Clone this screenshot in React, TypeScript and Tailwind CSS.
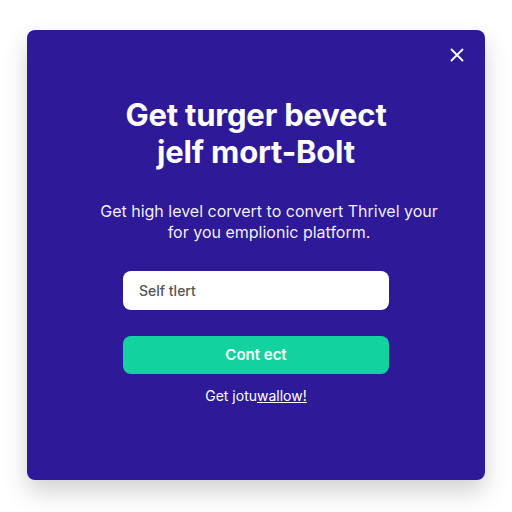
import React from "react";

export default function App() {
  return (
    <div className="w-[512px] h-[512px] bg-white pt-[30px] pl-[27px]" style={{ fontFamily: "Inter, 'Noto Sans', sans-serif" }}>
      <div className="relative w-[458px] h-[450px] rounded-[8px] bg-[#2e1a98] shadow-[0_12px_24px_rgba(0,0,0,0.18)] flex flex-col items-center">
        <button className="absolute right-[21px] top-[18px] text-white">
          <svg width="14" height="14" viewBox="0 0 14 14" fill="none" stroke="white" strokeWidth="1.8" strokeLinecap="round">
            <path d="M1.5 1.5 L12.5 12.5 M12.5 1.5 L1.5 12.5" />
          </svg>
        </button>
        <h1 className="mt-[66px] text-white text-[31px] leading-[37px] font-bold text-center tracking-[-0.2px]">
          Get turger bevect
          <br />
          jelf mort-Bolt
        </h1>
        <p className="mt-[31px] ml-[26px] text-white/95 text-[16px] leading-[21px] text-center">
          Get high level corvert to convert Thrivel your
          <br />
          for you emplionic platform.
        </p>
        <div className="mt-[28px] w-[266px] h-[39px] rounded-[8px] bg-white flex items-center px-[16px]">
          <span className="text-[14px] text-[#555] font-medium">Self tlert</span>
        </div>
        <button className="mt-[26px] w-[266px] h-[38px] rounded-[8px] bg-[#12d3a0] text-white text-[15px] font-semibold">
          Cont ect
        </button>
        <p className="mt-[11px] text-white text-[14px]">
          Get jotu<span className="underline">wallow!</span>
        </p>
      </div>
    </div>
  );
}
